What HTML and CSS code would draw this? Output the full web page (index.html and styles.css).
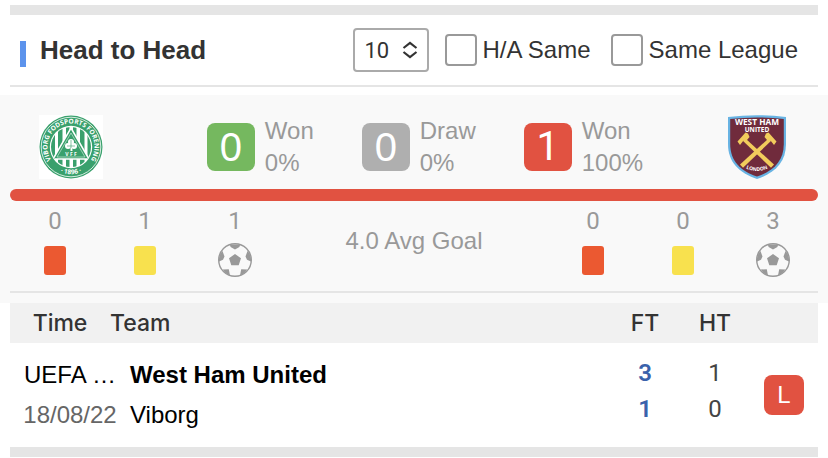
FILE: index.html
```html
<!DOCTYPE html>
<html lang="en">
<head>
<meta charset="utf-8">
<meta name="viewport" content="width=device-width, initial-scale=1">
<title>Head to Head</title>
<link rel="stylesheet" href="styles.css">
</head>
<body>
<svg class="defs" aria-hidden="true">
  <symbol id="ball" viewBox="0 0 34 34">
    <circle cx="17" cy="17" r="16.3" fill="none" stroke="#999" stroke-width="1.4"/>
    <path fill="#999" d="M17 11l6 4.300-2.300 7h-7.400l-2.300-7zM11.800 1.600h10.400L21.400 4 17 6.400 12.600 4zM1 18.500C.6 14.500 2 10.500 4.500 8l2 5.500-1.500 3.200zM33 18.500c.4-4-1-8-3.500-10.500l-2 5.500 1.500 3.200zM4.800 26.500l6-.3 1.200 6.300c-3-1-5.600-3.200-7.200-6zM29.200 26.500l-6-.3-1.200 6.300c3-1 5.600-3.200 7.200-6z"/>
  </symbol>
</svg>
<main class="panel">
  <header class="head">
    <h2 class="title"><span class="mark"></span>Head to Head</h2>
    <div class="select-box">
      <select class="select num" aria-label="Number of matches"><option>10</option></select>
      <svg class="arrows" viewBox="0 0 16 18" aria-hidden="true"><path d="M1.500 7L8 1.800 14.500 7M1.500 11L8 16.200 14.500 11" fill="none" stroke="#333" stroke-width="2.200"/></svg>
    </div>
    <label class="check"><input type="checkbox">H/A Same</label>
    <label class="check"><input type="checkbox">Same League</label>
  </header>

  <section class="summary">
    <div class="teams">
      <svg class="logo" viewBox="0 0 64 64" role="img" aria-label="Viborg">
        <defs>
          <path id="ring" d="M15.400 48.600A23.500 23.500 0 1 1 48.600 48.600"/>
          <path id="ring-low" d="M17 55A28.500 28.500 0 0 0 47 55"/>
          <clipPath id="disc"><circle cx="32" cy="32" r="20"/></clipPath>
        </defs>
        <path fill="#fff" d="M0 0h64v64H0z"/>
        <circle cx="32" cy="32" r="31.500" fill="#39a06c"/>
        <circle cx="32" cy="32" r="29.800" fill="none" stroke="#fff" stroke-width=".8"/>
        <circle cx="32" cy="32" r="21.200" fill="#fff"/>
        <g clip-path="url(#disc)" fill="#39a06c">
          <path d="M11 10h5v44h-5zM19 10h4.500v44H19zM27 10h3.500v44H27zM34 10h3.500v44H34zM41 10h4.500v44H41zM48.500 10h5v44h-5z"/>
          <path d="M32 13L50 44H14z" stroke="#fff" stroke-width="1.500"/>
          <path d="M32 18L46 42H18z" fill="none" stroke="#c7e5d6" stroke-width=".7"/>
        </g>
        <g fill="#fff"><circle cx="32" cy="27" r="3"/><circle cx="29" cy="31" r="3"/><circle cx="35" cy="31" r="3"/><path d="M31.500 31h1.500l.5 5h-2z"/></g>
        <path d="M32 25v8M28 31h8" stroke="#39a06c" stroke-width=".6"/>
        <text class="crest-text" font-size="5" x="32" y="40.500">V F F</text>
        <text class="crest-text" font-size="6.500"><textPath href="#ring" startOffset="50%">VIBORG FODSPORTS FORENING</textPath></text>
        <text class="crest-text" font-size="6.500"><textPath href="#ring-low" startOffset="50%">· 1896 ·</textPath></text>
      </svg>
      <div class="results">
        <div class="result"><b class="tile win">0</b><p>Won<br>0%</p></div>
        <div class="result"><b class="tile draw">0</b><p>Draw<br>0%</p></div>
        <div class="result"><b class="tile loss num">1</b><p>Won<br>100%</p></div>
      </div>
      <svg class="logo" viewBox="0 0 64 64" role="img" aria-label="West Ham United">
        <defs><path id="shield-low" d="M19 52.500Q32 59.500 45 52.500"/></defs>
        <path fill="#68b3e3" d="M3 2Q32-1.500 61 2V29C61 47 50 58 32 64 14 58 3 47 3 29z"/>
        <path fill="#702b3c" d="M5.200 4Q32 .8 58.800 4V29C58.800 46 48.500 56 32 61.600 15.500 56 5.200 46 5.200 29z"/>
        <g fill="#f2cc5c">
          <path d="M20.500 23.500L49 49.500 46 52.800 17.800 25.800z"/><path d="M12.500 26.500l8-9 2.500 1 1.500 3.500-2.500 3-3.500.5-3.500 4.500z"/>
          <path d="M43.500 23.500L15 49.500 18 52.800 46.200 25.800z"/><path d="M51.500 26.500l-8-9-2.500 1-1.500 3.500 2.500 3 3.500.5 3.500 4.500z"/>
        </g>
        <text class="crest-text" font-size="8.300" x="32" y="10.300">WEST HAM</text>
        <text class="crest-text" font-size="6.500" x="32" y="16.500">UNITED</text>
        <text class="crest-text" font-size="5"><textPath href="#shield-low" startOffset="50%">LONDON</textPath></text>
      </svg>
    </div>
    <div class="bar"></div>
    <div class="stats">
      <div class="stat"><span class="num">0</span><i class="icon"><i class="card red"></i></i></div>
      <div class="stat"><span class="num">1</span><i class="icon"><i class="card yellow"></i></i></div>
      <div class="stat"><span class="num">1</span><svg class="icon"><use href="#ball"/></svg></div>
      <p class="average">4.0 Avg Goal</p>
      <div class="stat"><span class="num">0</span><i class="icon"><i class="card red"></i></i></div>
      <div class="stat"><span class="num">0</span><i class="icon"><i class="card yellow"></i></i></div>
      <div class="stat"><span class="num">3</span><svg class="icon"><use href="#ball"/></svg></div>
    </div>
  </section>

  <div class="matches">
    <table>
      <colgroup><col class="c-time"><col class="c-indent"><col><col class="c-score"><col class="c-score"><col class="c-result"></colgroup>
      <thead>
        <tr><th>Time</th><th colspan="2" class="team">Team</th><th>FT</th><th>HT</th><th></th></tr>
      </thead>
      <tbody>
        <tr>
          <td colspan="2" class="when">UEFA …<br><span class="date">18/08/22</span></td>
          <td class="team"><b>West Ham United</b><br>Viborg</td>
          <td class="score full num">3<br>1</td>
          <td class="score num">1<br>0</td>
          <td class="outcome"><span class="badge">L</span></td>
        </tr>
      </tbody>
    </table>
  </div>
</main>
</body>
</html>
```
FILE: styles.css
```css
* { box-sizing: border-box; }

body {
  margin: 0;
  background: #fff;
  color: #333;
  font: 24px/32px "Liberation Sans", Arial, sans-serif;
}

h2, p { margin: 0; }

.defs { display: none; }
.num { font-family: Roboto, "Liberation Sans", sans-serif; }
.panel { padding-top: 5px; }
.panel::before {
  content: "";
  display: block;
  height: 10px;
  margin: 0 10px;
  background: #e5e5e5;
}

.head {
  display: flex;
  align-items: center;
  height: 72px;
  margin: 0 10px 8px;
  padding: 0 20px 0 10px;
  border-bottom: 2px solid #e5e5e5;
}

.title {
  display: flex;
  align-items: flex-end;
  gap: 14px;
  margin-right: auto;
  font-size: 26px;
  line-height: 34px;
}
.mark { width: 6px; height: 26px; background: #5c93ec; }

.select-box { position: relative; }
.select {
  display: block;
  width: 76px;
  height: 44px;
  padding: 0 10px;
  appearance: none;
  border: 2px solid #aaa;
  border-radius: 4px;
  background: #fff;
  color: #333;
  font-size: 22px;
}
.arrows {
  position: absolute;
  top: 13px;
  right: 11px;
  width: 16px;
  height: 18px;
  pointer-events: none;
}

.check { display: flex; align-items: center; gap: 6px; margin-left: 20px; }
.select-box + .check { margin-left: 16px; }
.check input {
  width: 32px;
  height: 32px;
  margin: 0;
  appearance: none;
  border: 2px solid #999;
  border-radius: 4px;
  background: #fff;
}

.summary {
  padding: 20px 10px 10px;
  background: #f9f9f9;
  color: #999;
}
.teams { display: flex; align-items: center; padding: 0 29px; }
.logo { flex: none; width: 64px; height: 64px; }
.crest-text {
  fill: #fff;
  font-family: "Open Sans", "Liberation Sans", sans-serif;
  font-weight: 700;
  text-anchor: middle;
}
.results { display: flex; flex: 1; justify-content: center; gap: 48px; padding-left: 22px; }
.result { display: flex; align-items: center; gap: 10px; }
.tile {
  width: 48px;
  height: 48px;
  border-radius: 8px;
  color: #fff;
  font-size: 40px;
  font-weight: 400;
  line-height: 48px;
  text-align: center;
}
.win { background: #75b85f; }
.draw { background: #afafaf; }
.loss { background: #e15241; }

.bar { height: 12px; margin-top: 10px; border-radius: 6px; background: #e15241; }

.stats {
  display: grid;
  grid-template-columns: repeat(3, 90px) 1fr repeat(3, 90px);
  align-items: center;
  padding: 4px 0 14px;
  border-bottom: 2px solid #e5e5e5;
}
.stat { display: flex; flex-direction: column; align-items: center; gap: 6px; }
.icon { display: flex; align-items: center; justify-content: center; width: 34px; height: 34px; }
.card { width: 22px; height: 29px; border-radius: 3px; }
.red { background: #eb5931; }
.yellow { background: #f8e14e; }
.average { text-align: center; }

.matches { margin: 0 10px; border-bottom: 10px solid #e5e5e5; }
table { width: 100%; table-layout: fixed; border-collapse: collapse; }
.c-time { width: 100px; }
.c-indent { width: 20px; }
.c-score { width: 70px; }
.c-result { width: 68px; }
th {
  height: 40px;
  padding: 0;
  background: #f1f1f1;
  font: 500 23px/40px Inter, "Liberation Sans", sans-serif;
}
td { padding: 12px 0; color: #000; line-height: 40px; text-align: center; vertical-align: top; }
th.team, td.team { text-align: left; }
.date { color: #666; }
.score { color: #444; line-height: 36px; }
.full { color: #3a62ab; font-weight: 600; }
.outcome { vertical-align: middle; }
.badge {
  display: block;
  width: 40px;
  height: 40px;
  margin: 0 auto;
  border-radius: 8px;
  background: #e15241;
  color: #fff;
}
```
